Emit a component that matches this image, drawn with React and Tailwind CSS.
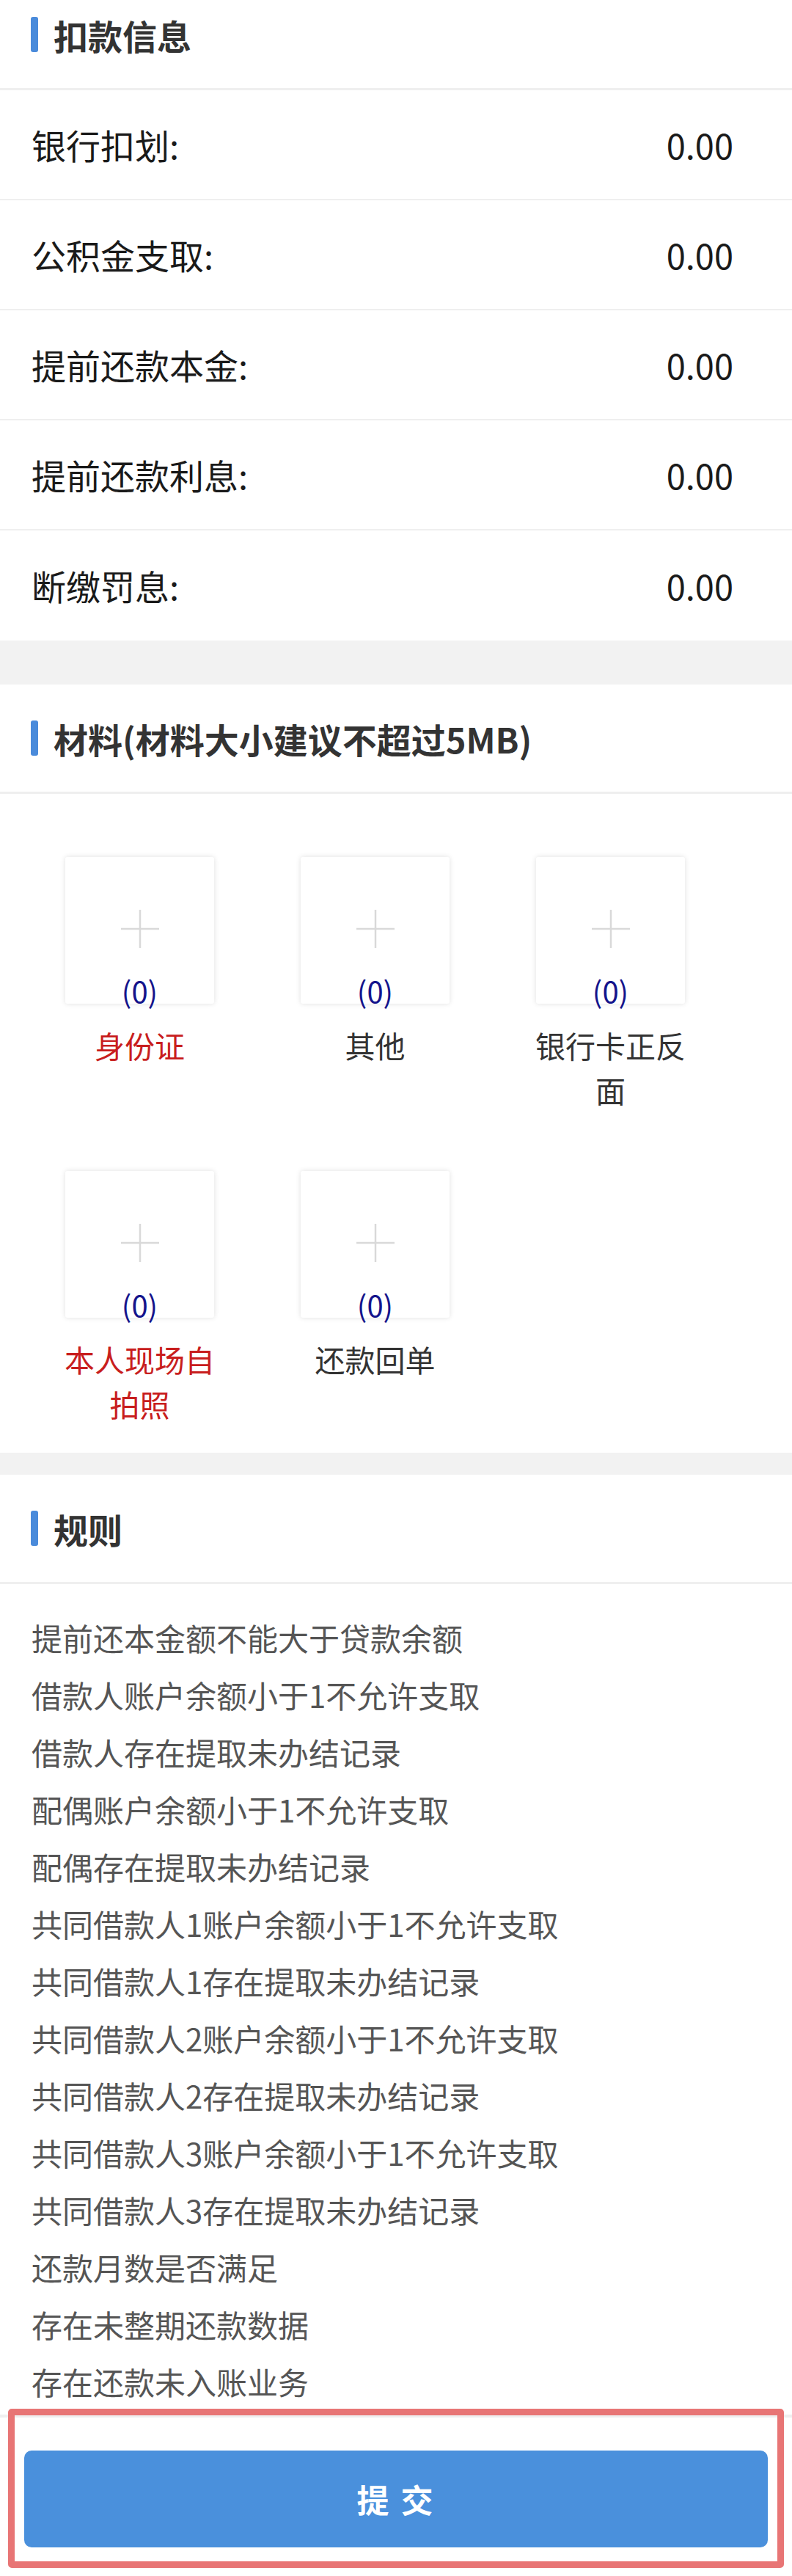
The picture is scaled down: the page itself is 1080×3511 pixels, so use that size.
const deductions = [
  { label: '银行扣划:', value: '0.00' },
  { label: '公积金支取:', value: '0.00' },
  { label: '提前还款本金:', value: '0.00' },
  { label: '提前还款利息:', value: '0.00' },
  { label: '断缴罚息:', value: '0.00' },
];

const materials = [
  { name: '身份证', count: 0, required: true },
  { name: '其他', count: 0, required: false },
  { name: '银行卡正反面', count: 0, required: false },
  { name: '本人现场自拍照', count: 0, required: true },
  { name: '还款回单', count: 0, required: false },
];

const rules = [
  '提前还本金额不能大于贷款余额',
  '借款人账户余额小于1不允许支取',
  '借款人存在提取未办结记录',
  '配偶账户余额小于1不允许支取',
  '配偶存在提取未办结记录',
  '共同借款人1账户余额小于1不允许支取',
  '共同借款人1存在提取未办结记录',
  '共同借款人2账户余额小于1不允许支取',
  '共同借款人2存在提取未办结记录',
  '共同借款人3账户余额小于1不允许支取',
  '共同借款人3存在提取未办结记录',
  '还款月数是否满足',
  '存在未整期还款数据',
  '存在还款未入账业务',
];

const SectionTitle = ({ children }) => (
  <div className="flex h-[149px] items-center border-b-[3px] border-[#efefef] pl-[42px]">
    <span className="h-[48px] w-[10px] rounded-[3px] bg-[#4a8bdb]" />
    <h2 className="ml-[21px] text-[47px] font-bold leading-none text-[#333]">{children}</h2>
  </div>
);

const UploadBox = ({ item }) => (
  <div className="flex flex-col items-center">
    <div className="relative flex h-[200px] w-[203px] items-center justify-center rounded-[3px] bg-white shadow-[0_0_7px_rgba(0,0,0,0.13)]">
      <svg width="52" height="52" viewBox="0 0 52 52" className="-mt-[4px]">
        <path d="M26 0v52M0 26h52" stroke="#d9d9d9" strokeWidth="2.5" fill="none" />
      </svg>
      <span className="absolute bottom-[-4px] left-0 right-0 text-center text-[40px] leading-[44px] text-[#14148c]">
        ({item.count})
      </span>
    </div>
    <p
      className={
        'mt-[26px] w-[214px] text-center text-[41px] leading-[61px] ' +
        (item.required ? 'text-[#c81e1e]' : 'text-[#333]')
      }
    >
      {item.name}
    </p>
  </div>
);

export default function App() {
  return (
    <div
      className="-mt-[26px] w-[1080px] bg-white"
      style={{ fontFamily: '"Noto Sans CJK SC", "Noto Sans", sans-serif' }}
    >
      {/* 扣款信息 */}
      <section>
        <SectionTitle>扣款信息</SectionTitle>
        {deductions.map((row, i) => (
          <div
            key={row.label}
            className={
              'flex h-[150px] items-center justify-between pl-[43px] pr-[80px] ' +
              (i < deductions.length - 1 ? 'border-b-2 border-[#efefef]' : '')
            }
          >
            <span className="text-[47px] text-[#1a1a1a]">{row.label}</span>
            <span className="text-[47px] text-[#1a1a1a]">{row.value}</span>
          </div>
        ))}
      </section>

      <div className="h-[60px] bg-[#f2f2f2]" />

      {/* 材料 */}
      <section>
        <SectionTitle>材料(材料大小建议不超过5MB)</SectionTitle>
        <div className="grid grid-cols-[repeat(3,321px)] gap-y-[80px] pb-[36px] pl-[30px] pt-[86px]">
          {materials.map((m) => (
            <UploadBox key={m.name} item={m} />
          ))}
        </div>
      </section>

      <div className="h-[30px] bg-[#f2f2f2]" />

      {/* 规则 */}
      <section>
        <SectionTitle>规则</SectionTitle>
        <ul className="pb-[6px] pl-[43px] pt-[34px]">
          {rules.map((r) => (
            <li key={r} className="text-[42px] leading-[78px] text-[#555]">
              {r}
            </li>
          ))}
        </ul>
      </section>

      {/* 底部按钮 */}
      <div className="relative border-t-[4px] border-[#efefef] bg-white px-[33px] pb-[39px] pt-[45px]">
        <button className="flex h-[132px] w-full items-center justify-center rounded-[10px] bg-[#4a90dc] text-[44px] font-bold tracking-[3px] text-white">
          提 交
        </button>
        <div className="pointer-events-none absolute -top-[12px] bottom-[11px] left-[11px] right-[11px] rounded-[5px] border-[9px] border-[#e87575]" />
      </div>
    </div>
  );
}
